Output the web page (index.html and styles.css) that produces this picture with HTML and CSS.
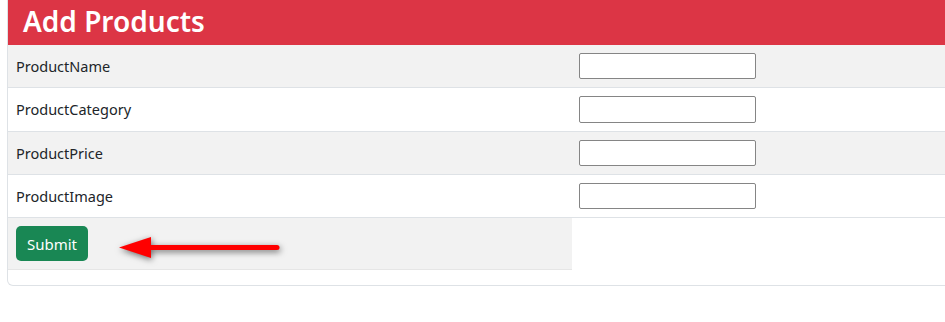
FILE: index.html
```html
<!DOCTYPE html>
<html lang="en">
<head>
<meta charset="utf-8">
<title>Add Products</title>
<link rel="stylesheet" href="styles.css">
</head>
<body>
<div class="card">
  <div class="card-header"><h2 class="title">Add Products</h2></div>
  <table class="form-table">
    <tr class="odd">
      <td class="label-cell">ProductName</td>
      <td class="input-cell"><input type="text" class="field"></td>
    </tr>
    <tr>
      <td class="label-cell">ProductCategory</td>
      <td class="input-cell"><input type="text" class="field"></td>
    </tr>
    <tr class="odd">
      <td class="label-cell">ProductPrice</td>
      <td class="input-cell"><input type="text" class="field"></td>
    </tr>
    <tr>
      <td class="label-cell">ProductImage</td>
      <td class="input-cell"><input type="text" class="field"></td>
    </tr>
    <tr class="odd last">
      <td class="label-cell button-cell"><button class="btn-submit" type="button">Submit</button></td>
    </tr>
  </table>
  <svg class="arrow" width="180" height="40" viewBox="0 0 180 40" xmlns="http://www.w3.org/2000/svg">
    <line x1="34" y1="17.5" x2="162" y2="17.5" stroke="#ff0000" stroke-width="5" stroke-linecap="round"/>
    <polygon points="4,17.5 36,7 36,28" fill="#ff0000"/>
  </svg>
</div>
</body>
</html>
```

FILE: styles.css
```css
html, body {
  margin: 0;
  padding: 0;
  background: #ffffff;
  overflow: hidden;
}

body {
  font-family: "Noto Sans", "Open Sans", sans-serif;
  color: #212529;
}

.card {
  position: relative;
  margin-left: 7px;
  width: 1130px;
  border: 1px solid #dee2e6;
  border-top: none;
  border-radius: 0 0 6px 6px;
  padding-bottom: 15px;
}

.card-header {
  background: #dc3545;
  height: 45px;
  display: flex;
  align-items: center;
  padding-left: 15px;
}

.title {
  margin: 0;
  color: #ffffff;
  font-size: 28px;
  font-weight: 600;
  line-height: 1;
  position: relative;
  top: -2px;
}

.form-table {
  width: 100%;
  border-collapse: collapse;
}

.form-table tr {
  border-bottom: 1px solid #dee2e6;
}

.form-table tr.odd td {
  background: #f2f2f2;
}

.form-table tr.last {
  border-bottom: none;
}

.form-table tr.last td {
  border-bottom: 1px solid #e6e6e6;
}

.form-table td {
  padding: 8px;
  font-size: 14.5px;
  vertical-align: middle;
}

.label-cell {
  width: 548px;
  height: 26px;
  padding-bottom: 9px;
}

.field {
  box-sizing: border-box;
  width: 177px;
  height: 26.33px;
  border: 1px solid #858585;
  border-radius: 2px;
  margin: 0 0 0 -1px;
  padding: 0 4px;
  background: #ffffff;
  display: block;
}

.btn-submit {
  display: block;
  width: 72px;
  height: 35px;
  border: none;
  border-radius: 5px;
  background: #198754;
  color: #ffffff;
  font-family: "Noto Sans", "Open Sans", sans-serif;
  font-size: 15px;
  padding: 0;
}

.arrow {
  position: absolute;
  left: 107px;
  top: 230px;
  filter: drop-shadow(1px 2px 3px rgba(0, 0, 0, 0.55));
}
```
